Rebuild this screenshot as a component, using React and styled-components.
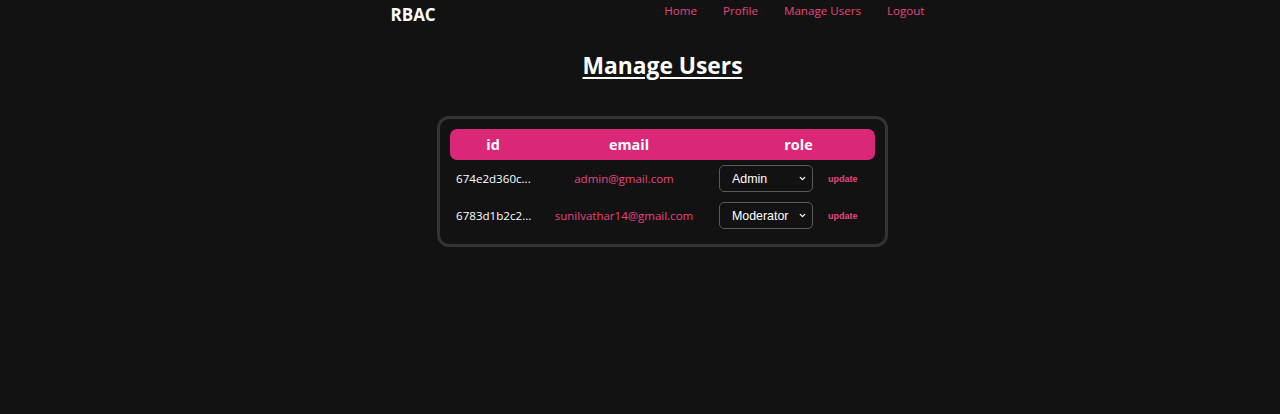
import React from "react";
import styled, { createGlobalStyle } from "styled-components";
import { ChevronDown } from "lucide-react";

const pink = "#db2777";
const pinkText = "#e8457d";

const GlobalStyle = createGlobalStyle`
  html, body {
    margin: 0;
    padding: 0;
    background: #121212;
  }
  body {
    font-family: "Open Sans", "Noto Sans", sans-serif;
    color: #fff;
  }
`;

const PAGE = styled.div`
  min-height: 414px;
  padding-left: 45px;
  box-sizing: border-box;
  background: #121212;
`;

const NAVBAR = styled.header`
  width: 544px;
  margin: 0 auto;
  display: flex;
  justify-content: space-between;
  align-items: flex-start;
  height: 30px;
`;

const LOGO = styled.div`
  font-size: 17px;
  font-weight: 700;
  line-height: 30px;
  color: #fff;
`;

const LINKS = styled.nav`
  display: flex;
  gap: 26px;
  padding-right: 10px;
`;

const NAV_LINK = styled.a`
  font-size: 11.6px;
  line-height: 22px;
  color: ${pinkText};
  text-decoration: none;
  cursor: pointer;
`;

const TITLE = styled.h1`
  margin: 20px 0 0;
  text-align: center;
  font-size: 22.8px;
  line-height: 32px;
  font-weight: 700;
  text-decoration: underline;
  text-underline-offset: 3px;
  text-decoration-thickness: 2px;
`;

const CARD = styled.section`
  width: 451px;
  box-sizing: border-box;
  margin: 34px auto 0;
  border: 3px solid #333;
  border-radius: 12px;
  padding: 10px 10px 10px;
`;

const HEAD = styled.div`
  display: grid;
  grid-template-columns: 86px 186px 153px;
  height: 31px;
  align-items: center;
  background: ${pink};
  border-radius: 7px;
`;

const HEAD_CELL = styled.div`
  text-align: center;
  font-size: 14.4px;
  font-weight: 700;
  color: #fff;
`;

const ROW = styled.div`
  display: grid;
  grid-template-columns: 86px 176px 163px;
  height: 37px;
  align-items: center;
`;

const ID_CELL = styled.div`
  padding-left: 6px;
  font-size: 11.6px;
  color: #fff;
  white-space: nowrap;
`;

const EMAIL_CELL = styled.div`
  text-align: center;
  font-size: 11.5px;
  color: ${pinkText};
  white-space: nowrap;
`;

const ROLE_CELL = styled.div`
  display: flex;
  align-items: center;
  padding-left: 7px;
  gap: 15px;
`;

const SELECT_WRAP = styled.div`
  position: relative;
  width: 94px;
  height: 27px;
`;

const SELECT = styled.select`
  appearance: none;
  width: 100%;
  height: 100%;
  box-sizing: border-box;
  background: #121212;
  color: #fff;
  border: 1.5px solid #5a5a5a;
  border-radius: 5px;
  font-family: "Liberation Sans", Arial, sans-serif;
  font-size: 12.4px;
  padding: 0 4px 0 12px;
  outline: none;
`;

const CHEVRON = styled(ChevronDown)`
  position: absolute;
  right: 6px;
  top: 9px;
  pointer-events: none;
  color: #fff;
`;

const UPDATE = styled.button`
  background: transparent;
  border: none;
  padding: 0;
  color: ${pinkText};
  font-family: "Liberation Sans", Arial, sans-serif;
  font-size: 9px;
  font-weight: 700;
  cursor: pointer;
`;

const users = [
  { id: "674e2d360c...", email: "admin@gmail.com", role: "Admin" },
  { id: "6783d1b2c2...", email: "sunilvathar14@gmail.com", role: "Moderator" }
];

export default function App() {
  return (
    <>
      <GlobalStyle />
      <PAGE>
        <NAVBAR>
          <LOGO>RBAC</LOGO>
          <LINKS>
            <NAV_LINK>Home</NAV_LINK>
            <NAV_LINK>Profile</NAV_LINK>
            <NAV_LINK>Manage Users</NAV_LINK>
            <NAV_LINK>Logout</NAV_LINK>
          </LINKS>
        </NAVBAR>
        <TITLE>Manage Users</TITLE>
        <CARD>
          <HEAD>
            <HEAD_CELL>id</HEAD_CELL>
            <HEAD_CELL>email</HEAD_CELL>
            <HEAD_CELL>role</HEAD_CELL>
          </HEAD>
          {users.map((u) => (
            <ROW key={u.id}>
              <ID_CELL>{u.id}</ID_CELL>
              <EMAIL_CELL>{u.email}</EMAIL_CELL>
              <ROLE_CELL>
                <SELECT_WRAP>
                  <SELECT defaultValue={u.role}>
                    <option>User</option>
                    <option>Moderator</option>
                    <option>Admin</option>
                  </SELECT>
                  <CHEVRON size={9} strokeWidth={3.5} />
                </SELECT_WRAP>
                <UPDATE>update</UPDATE>
              </ROLE_CELL>
            </ROW>
          ))}
        </CARD>
      </PAGE>
    </>
  );
}
